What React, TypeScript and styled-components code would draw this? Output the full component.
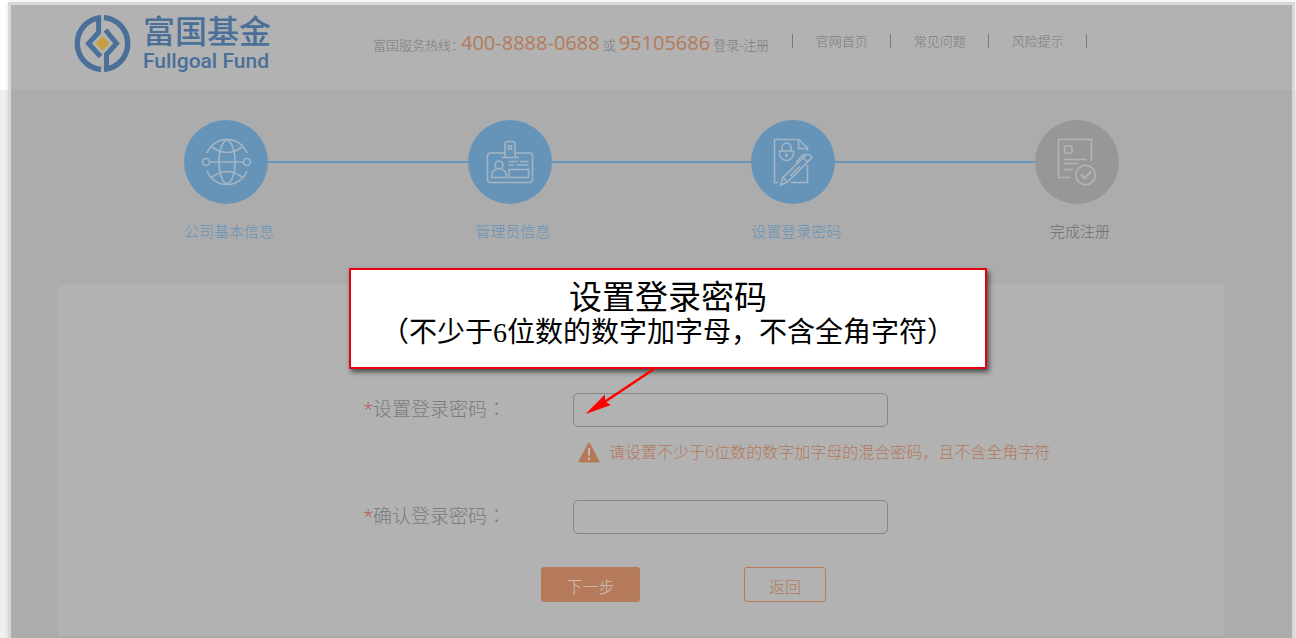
import React from "react";
import styled, { createGlobalStyle } from "styled-components";

const color = {
  blue: "#6694b9",
  orange: "#b47a59",
  text: "#7b7b7b",
  panel: "#b2b2b2",
  stage: "#acacac",
  red: "#e60012",
};

const GlobalStyle = createGlobalStyle`
  * { box-sizing: border-box; }
  body {
    margin: 0;
    background: linear-gradient(#fff 90px, #efefef 90px);
    font-family: "Open Sans", "Noto Sans CJK SC", sans-serif;
    font-weight: 300;
    color: ${color.text};
  }
  button, input { font: inherit; }
`;

const Frame = styled.div`
  margin: 0 1px 0 8px;
  min-height: calc(100vh - 2px);
  border: 3px solid #d8d8d8;
  border-bottom: 0;
  background: ${color.stage};
  box-shadow: 0 0 4px rgba(0, 0, 0, 0.12);
`;

const Page = styled.div`
  padding-top: 2px;
  overflow: hidden;
`;

const Header = styled.header`
  display: flex;
  align-items: flex-start;
  height: 85px;
  padding: 10px 63px;
  background: ${color.panel};
`;

const Brand = styled.a`
  display: flex;
  gap: 12px;
  width: 299px;
  flex: none;
  color: #4a6f98;
  text-decoration: none;
`;

const BrandText = styled.span`
  display: flex;
  flex-direction: column;
`;

const BrandCn = styled.span`
  font: 500 32px/34px Roboto, "Noto Sans CJK SC", sans-serif;
`;

const BrandEn = styled.span`
  font: 500 21px/24px Roboto, sans-serif;
`;

const Hotline = styled.p`
  display: flex;
  align-items: baseline;
  gap: 3px;
  margin: 14px 0 0;
  font-size: 13px;
  line-height: 28px;
  white-space: nowrap;
`;

const Phone = styled.a`
  font-size: 20px;
  font-weight: 400;
  color: ${color.orange};
  text-decoration: none;
`;

const HotlineLabel = styled.span`
  width: 85px;
`;

const CenteredMark = styled.span`
  font-family: "Noto Sans CJK TC", sans-serif;
  line-height: 1;
`;

const Nav = styled.nav`
  display: flex;
  align-items: center;
  margin: 19px 0 0 23px;
  height: 14px;
  border-left: 1px solid ${color.text};
`;

const NavLink = styled.a`
  width: 98px;
  border-right: 1px solid ${color.text};
  font-size: 13px;
  line-height: 14px;
  text-align: center;
  white-space: nowrap;
  color: ${color.text};
  text-decoration: none;
`;

const Steps = styled.ol`
  display: flex;
  width: 73%;
  margin: 0 auto;
  padding: 30px 0 42px;
  list-style: none;
`;

const Step = styled.li<{ $last?: boolean }>`
  display: flex;
  flex: ${(p) => (p.$last ? "none" : "1")};
`;

const StepBody = styled.div`
  display: flex;
  flex-direction: column;
  align-items: center;
  gap: 16px;
  width: 84px;
  flex: none;
`;

const StepIcon = styled.svg<{ $done: boolean }>`
  display: block;
  width: 84px;
  height: 84px;
  border-radius: 50%;
  background: ${(p) => (p.$done ? color.blue : "#979797")};
  fill: none;
  stroke: ${(p) => (p.$done ? "#a3b5c4" : "#b4b4b4")};
  stroke-width: 1.6;
`;

const StepLabel = styled.span<{ $done: boolean }>`
  padding-left: 6px;
  font-size: 15px;
  line-height: 23px;
  white-space: nowrap;
  color: ${(p) => (p.$done ? color.blue : "#6f6f6f")};
`;

const Connector = styled.span`
  flex: 1;
  height: 2px;
  margin-top: 41px;
  background: ${color.blue};
`;

const Card = styled.main`
  position: relative;
  margin: 0 68px 0 47px;
  padding: 108px 0 34px 305px;
  background: ${color.panel};
`;

const Field = styled.div`
  display: grid;
  grid-template-columns: 210px 315px;
  align-items: center;
`;

const FieldLabel = styled.label`
  padding-bottom: 2px;
  font-size: 19px;
  line-height: 30px;
`;

const Required = styled.span`
  display: inline-block;
  width: 10px;
  color: #c0504a;
`;

const PasswordInput = styled.input`
  width: 100%;
  height: 34px;
  padding: 0 10px;
  border: 1px solid #868686;
  border-radius: 5px;
  background: transparent;
  outline: none;
`;

const Hint = styled.p`
  display: flex;
  align-items: center;
  gap: 9px;
  margin: 13px 0 35px 215px;
  font-size: 16px;
  line-height: 25px;
  white-space: nowrap;
  color: ${color.orange};
`;

const Actions = styled.div`
  display: flex;
  gap: 104px;
  margin: 33px 0 0 178px;
`;

const ActionButton = styled.button<{ $primary?: boolean }>`
  width: ${(p) => (p.$primary ? 99 : 82)}px;
  height: 35px;
  padding: 4px 0 0;
  border: 1px solid ${color.orange};
  border-radius: 3px;
  background: ${(p) => (p.$primary ? color.orange : "transparent")};
  color: ${(p) => (p.$primary ? "#d0c3bb" : color.orange)};
  font-size: 16px;
  line-height: 30px;
`;

const Callout = styled.aside`
  position: absolute;
  top: -17px;
  left: 291px;
  width: 638px;
  padding: 11px 0 17px;
  border: 2px solid ${color.red};
  background: #fff;
  box-shadow: 2px 3px 5px rgba(0, 0, 0, 0.6);
  color: #000;
  font-family: "Liberation Serif", "Noto Sans CJK SC", serif;
  font-weight: 400;
  text-align: center;
  white-space: nowrap;
`;

const CalloutTitle = styled.h2`
  margin: 0;
  font-size: 33px;
  font-weight: 400;
  line-height: 35px;
`;

const CalloutText = styled.p`
  margin: 0;
  font-size: 28px;
  line-height: 34px;
`;

const Arrow = styled.svg`
  position: absolute;
  top: 97px;
  left: 232px;
  pointer-events: none;
`;

function Logo() {
  return (
    <svg width="57" height="57" viewBox="0 0 57 57" fill="none" stroke="#4a6f98" aria-hidden="true">
      <path d="M27 2.600A26 26 0 0 0 27 54.400M30 2.600A26 26 0 0 1 30 54.400" strokeWidth="5.400" />
      <path d="M24.600 2V17.500L14.500 28.500L26.500 41.500M31.500 15L42.500 28.500L32.500 39.500V54" strokeWidth="5" />
      <path d="M28.500 21L35.500 28.500L28.500 36L21.500 28.500Z" fill="#c5a040" stroke="none" />
    </svg>
  );
}

const GlobeIcon = () => (
  <>
    <path d="M23 33A21.500 21.500 0 0 1 63 33M23 51A21.500 21.500 0 0 0 63 51" />
    <ellipse cx="43" cy="42" rx="8" ry="21.500" />
    <circle cx="22" cy="42" r="3.500" />
    <circle cx="63" cy="42" r="3.500" />
    <path d="M25.500 42H59.500M28 27Q43 38 58 27M28 57Q43 46 58 57" />
  </>
);

const BadgeIcon = () => (
  <>
    <path d="M37 33H22.500Q19.500 33 19.500 36V59.500Q19.500 62.500 22.500 62.500H61.500Q64.500 62.500 64.500 59.500V36Q64.500 33 61.500 33H47" />
    <path d="M37 37V24.500Q37 21.500 40 21.500H44Q47 21.500 47 24.500V37M34 37.500H51" />
    <rect x="40.500" y="26" width="3" height="3" />
    <circle cx="31" cy="45" r="4" />
    <path d="M28.500 49Q23.500 50.500 23.500 57.500H38.500Q38.500 50.500 33.500 49" />
    <path d="M40.500 41.500H49.500M52 41.500H60.500M40.500 45H46M48.500 45H60.500" />
    <rect x="41" y="49.500" width="19.500" height="8" />
  </>
);

const PasswordIcon = () => (
  <>
    <path d="M27 62.500H23.500V19.500H48L56.500 28V31M47.500 20V28.500H56M56.500 45V62.500H40" />
    <path d="M28.500 31H42.500V33.500A7 7 0 0 1 28.500 33.500ZM31 31V27.500A4.500 4.500 0 0 1 40 27.500V31" />
    <path d="M35.500 33.500V37" strokeWidth="2.400" />
    <path d="M29.500 65L32 57.500L55.500 34.500Q58.500 33.500 60.800 37.500L36.500 62ZM32 57.500L36.500 62M52 38L56.500 42M45 42.500L52 34.500L55 34.500M39 56L49 46" />
  </>
);

const DoneIcon = () => (
  <>
    <path d="M35 57.500H23.500V19.500H56.500V41" />
    <rect x="29.500" y="26" width="7.500" height="7" rx="1" />
    <path d="M29 39.500H52M29 43.500H43M29 49.500H38" />
    <circle cx="50.500" cy="55" r="9.700" />
    <path d="M46 54.500L49.500 58.500L56 51.500" strokeWidth="2" />
  </>
);

const steps = [
  { label: "公司基本信息", done: true, Icon: GlobeIcon },
  { label: "管理员信息", done: true, Icon: BadgeIcon },
  { label: "设置登录密码", done: true, Icon: PasswordIcon },
  { label: "完成注册", done: false, Icon: DoneIcon },
];

export default function App() {
  return (
    <Page>
      <GlobalStyle />
      <Frame>
        <Header>
          <Brand href="#">
            <Logo />
            <BrandText>
              <BrandCn>富国基金</BrandCn>
              <BrandEn>Fullgoal Fund</BrandEn>
            </BrandText>
          </Brand>
          <Hotline>
            <HotlineLabel>富国服务热线：</HotlineLabel>
            <Phone href="tel:400-8888-0688">400-8888-0688</Phone>
            <span>或</span>
            <Phone href="tel:95105686">95105686</Phone>
            <span>登录-注册</span>
          </Hotline>
          <Nav>
            <NavLink href="#">官网首页</NavLink>
            <NavLink href="#">常见问题</NavLink>
            <NavLink href="#">风险提示</NavLink>
          </Nav>
        </Header>

        <Steps>
          {steps.map(({ label, done, Icon }, i) => (
            <Step key={label} $last={i === steps.length - 1}>
              <StepBody>
                <StepIcon viewBox="0 0 84 84" $done={done} aria-hidden="true">
                  <Icon />
                </StepIcon>
                <StepLabel $done={done}>{label}</StepLabel>
              </StepBody>
              {i < steps.length - 1 && <Connector />}
            </Step>
          ))}
        </Steps>

        <Card>
          <form onSubmit={(e) => e.preventDefault()}>
            <Field>
              <FieldLabel htmlFor="password">
                <Required>*</Required>设置登录密码<CenteredMark>：</CenteredMark>
              </FieldLabel>
              <PasswordInput id="password" type="password" />
            </Field>
            <Hint>
              <svg width="22" height="21" viewBox="0 0 22 21" aria-hidden="true">
                <path d="M11 1.500L20.500 19.500H1.500Z" fill={color.orange} stroke={color.orange} strokeWidth="2" strokeLinejoin="round" />
                <path d="M11 6V13.500M11 15.500V18" stroke="#c9b8ad" strokeWidth="2" />
              </svg>
              请设置不少于6位数的数字加字母的混合密码，且不含全角字符
            </Hint>
            <Field>
              <FieldLabel htmlFor="confirm">
                <Required>*</Required>确认登录密码<CenteredMark>：</CenteredMark>
              </FieldLabel>
              <PasswordInput id="confirm" type="password" />
            </Field>
            <Actions>
              <ActionButton type="submit" $primary>
                下一步
              </ActionButton>
              <ActionButton type="button">返回</ActionButton>
            </Actions>
          </form>

          <Callout>
            <CalloutTitle>设置登录密码</CalloutTitle>
            <CalloutText>（不少于6位数的数字加字母，不含全角字符）</CalloutText>
            <Arrow width="76" height="50" viewBox="0 0 76 50" aria-hidden="true">
              <path d="M71 2L20 36" stroke="#f00" strokeWidth="2.500" />
              <path d="M2.500 47L22 27.500L22 34.500L28 38Z" fill="#f00" />
            </Arrow>
          </Callout>
        </Card>
      </Frame>
    </Page>
  );
}
